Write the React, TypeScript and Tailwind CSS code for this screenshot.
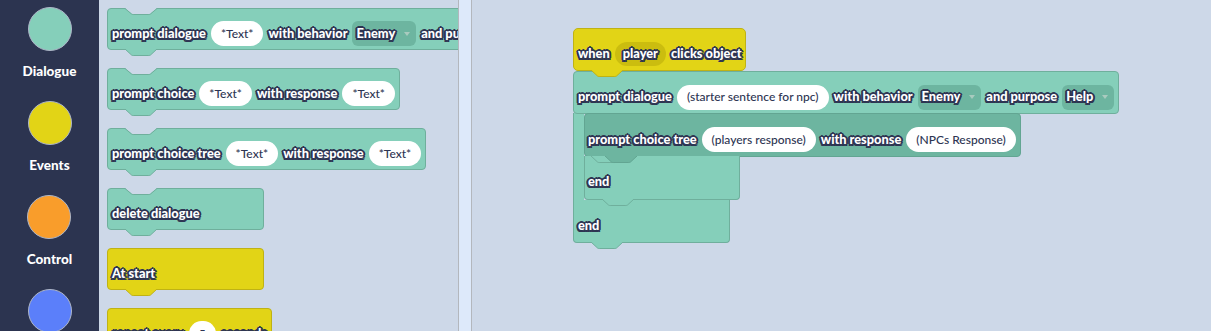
import type { ReactNode } from "react";

const OUTLINE =
    "[text-shadow:-1.5px_-1.5px_0_#2d3452,1.5px_-1.5px_0_#2d3452,-1.5px_1.5px_0_#2d3452,1.5px_1.5px_0_#2d3452,0_-2px_0_#2d3452,0_2px_0_#2d3452,-2px_0_0_#2d3452,2px_0_0_#2d3452]";

const TEAL = "#85cfba";
const TEAL_BORDER = "#6faf9c";
const TEAL_DARK = "#6db5a0";
const YELLOW = "#e2d416";
const YELLOW_BORDER = "#bfb214";
const BG = "#cdd8e8";

const Label = ({ children }: { children: ReactNode }) => (
    <span className={"whitespace-nowrap text-[12.8px] font-black text-white " + OUTLINE}>
        {children}
    </span>
);

const Pill = ({ children }: { children: ReactNode }) => (
    <span className="flex h-[25px] items-center whitespace-nowrap rounded-full bg-white px-[10px] text-[12px] font-medium text-[#2d3452]">
        {children}
    </span>
);

const Dropdown = ({ children }: { children: ReactNode }) => (
    <span className="flex h-[25px] items-center gap-[9px] rounded-[6px] bg-[#6db5a0] pl-[4px] pr-[6px]">
        <Label>{children}</Label>
        <svg width="6" height="4" viewBox="0 0 6 4">
            <path d="M0 0 L6 0 L3 4 Z" fill="#a9cbbf" />
        </svg>
    </span>
);

// bottom tab of a block, sits over the block below
const Tab = ({ fill, stroke, className }: { fill: string; stroke: string; className: string }) => (
    <svg className={"absolute top-full z-10 " + className} width="32" height="8" viewBox="0 0 32 8">
        <path d="M0 0 L6.5 6 Q7.2 6.5 8.2 6.5 L23.8 6.5 Q24.8 6.5 25.5 6 L32 0 Z" fill={fill} />
        <path
            d="M0 0 L6.5 6 Q7.2 6.5 8.2 6.5 L23.8 6.5 Q24.8 6.5 25.5 6 L32 0"
            fill="none"
            stroke={stroke}
            strokeWidth="1"
        />
    </svg>
);

// top notch cut into a block
const Notch = ({ stroke }: { stroke: string }) => (
    <svg className="absolute -top-px left-[17px]" width="32" height="8" viewBox="0 0 32 8">
        <path d="M0 0 L6.5 5.5 Q7.2 6 8.2 6 L23.8 6 Q24.8 6 25.5 5.5 L32 0 Z" fill={BG} />
        <path
            d="M0 0.5 L6.5 6 Q7.2 6.5 8.2 6.5 L23.8 6.5 Q24.8 6.5 25.5 6 L32 0.5"
            fill="none"
            stroke={stroke}
            strokeWidth="1"
        />
    </svg>
);

const FlyoutBlock = ({
    children,
    yellow = false,
    notch = true,
}: {
    children: ReactNode;
    yellow?: boolean;
    notch?: boolean;
}) => (
    <div
        className={
            "relative flex h-[42px] w-max min-w-[157px] shrink-0 items-center gap-[5px] rounded-[4px] border pb-[3px] pl-[4px] pr-[4px] pt-[12px] " +
            (yellow ? "border-[#bfb214] bg-[#e2d416]" : "border-[#6faf9c] bg-[#85cfba]")
        }
    >
        {notch && <Notch stroke={yellow ? YELLOW_BORDER : TEAL_BORDER} />}
        {children}
        <Tab
            fill={yellow ? YELLOW : TEAL}
            stroke={yellow ? YELLOW_BORDER : TEAL_BORDER}
            className="left-[17px]"
        />
    </div>
);

const categories = [
    { name: "Dialogue", color: "bg-[#85cfba]" },
    { name: "Events", color: "bg-[#e2d416]" },
    { name: "Control", color: "bg-[#f99d2b]" },
    { name: "", color: "bg-[#5b7ffa]" },
];

export default function App() {
    return (
        <div className="flex h-[331px] w-full overflow-hidden font-['Lato',sans-serif]">
            {/* Category sidebar */}
            <div className="flex w-[99px] shrink-0 flex-col items-center overflow-hidden bg-[#2c3450] pt-[7px]">
                {categories.map((c, i) => (
                    <div key={i} className="flex h-[94px] shrink-0 flex-col items-center">
                        <div className={"h-[44px] w-[44px] rounded-full border border-[#aeb6c8] " + c.color} />
                        {c.name && (
                            <span className="mt-[10px] text-[13.5px] font-black text-white">{c.name}</span>
                        )}
                    </div>
                ))}
            </div>

            {/* Flyout */}
            <div className="flex w-[359px] shrink-0 flex-col items-start gap-[18px] overflow-hidden bg-[#cdd8e8] pl-[8px] pt-[8px]">
                <FlyoutBlock>
                    <Label>prompt dialogue</Label>
                    <Pill>*Text*</Pill>
                    <Label>with behavior</Label>
                    <Dropdown>Enemy</Dropdown>
                    <Label>and purpose</Label>
                    <Dropdown>Help</Dropdown>
                </FlyoutBlock>
                <FlyoutBlock>
                    <Label>prompt choice</Label>
                    <Pill>*Text*</Pill>
                    <Label>with response</Label>
                    <Pill>*Text*</Pill>
                </FlyoutBlock>
                <FlyoutBlock>
                    <Label>prompt choice tree</Label>
                    <Pill>*Text*</Pill>
                    <Label>with response</Label>
                    <Pill>*Text*</Pill>
                </FlyoutBlock>
                <FlyoutBlock>
                    <Label>delete dialogue</Label>
                </FlyoutBlock>
                <FlyoutBlock yellow notch={false}>
                    <Label>At start</Label>
                </FlyoutBlock>
                <FlyoutBlock yellow notch={false}>
                    <Label>repeat every</Label>
                    <Pill>5</Pill>
                    <Label>seconds</Label>
                </FlyoutBlock>
            </div>

            {/* Scrollbar strip */}
            <div className="w-[14px] shrink-0 border-x border-[#b3b7bd] bg-[#dde9fa]" />

            {/* Workspace */}
            <div className="flex-1 bg-[#cdd8e8] pl-[101px] pt-[28px]">
                <div className="flex flex-col items-start">
                    {/* hat block */}
                    <div className="relative flex h-[43px] w-max items-center gap-[5px] rounded-[5px] border border-[#bfb214] bg-[#e2d416] pb-[3px] pl-[4px] pr-[4px] pt-[12px]">
                        <Label>when</Label>
                        <span className="flex h-[24px] items-center rounded-full bg-[#cbbd0f] px-[8px]">
                            <Label>player</Label>
                        </span>
                        <Label>clicks object</Label>
                        <Tab fill={YELLOW} stroke={YELLOW_BORDER} className="left-[17px]" />
                    </div>

                    {/* prompt dialogue C-block */}
                    <div className="relative flex h-[43px] w-max items-center gap-[5px] rounded-[4px] border border-[#6faf9c] bg-[#85cfba] pb-[3px] pl-[4px] pr-[4px] pt-[12px]">
                        <Label>prompt dialogue</Label>
                        <Pill>(starter sentence for npc)</Pill>
                        <Label>with behavior</Label>
                        <Dropdown>Enemy</Dropdown>
                        <Label>and purpose</Label>
                        <Dropdown>Help</Dropdown>
                    </div>
                    <div className="-mt-px flex">
                        <div className="w-[11px] self-stretch border-l border-[#6faf9c] bg-[#85cfba]" />
                        <div className="flex flex-col items-start">
                            <div className="relative flex h-[44px] w-max items-center gap-[5px] rounded-[4px] border border-[#62a592] bg-[#6db5a0] pb-[3px] pl-[3px] pr-[4px] pt-[12px]">
                                <Tab fill={TEAL} stroke={TEAL_BORDER} className="-top-px left-[6px]" />
                                <Label>prompt choice tree</Label>
                                <Pill>(players response)</Pill>
                                <Label>with response</Label>
                                <Pill>(NPCs Response)</Pill>
                                <Tab fill={TEAL_DARK} stroke="#62a592" className="left-[20px]" />
                            </div>
                            <div className="relative -mt-px flex h-[44px] w-[156px] items-center rounded-b-[4px] border border-t-0 border-[#6faf9c] bg-[#85cfba] pb-[3px] pl-[3px] pt-[12px]">
                                <Label>end</Label>
                                <Tab fill={TEAL} stroke={TEAL_BORDER} className="left-[17px]" />
                            </div>
                        </div>
                    </div>
                    <div className="relative flex h-[43px] w-[157px] items-center rounded-b-[4px] border border-t-0 border-[#6faf9c] bg-[#85cfba] pb-[3px] pl-[4px] pt-[12px]">
                        <Label>end</Label>
                        <Tab fill={TEAL} stroke={TEAL_BORDER} className="left-[17px]" />
                    </div>
                </div>
            </div>
        </div>
    );
}
